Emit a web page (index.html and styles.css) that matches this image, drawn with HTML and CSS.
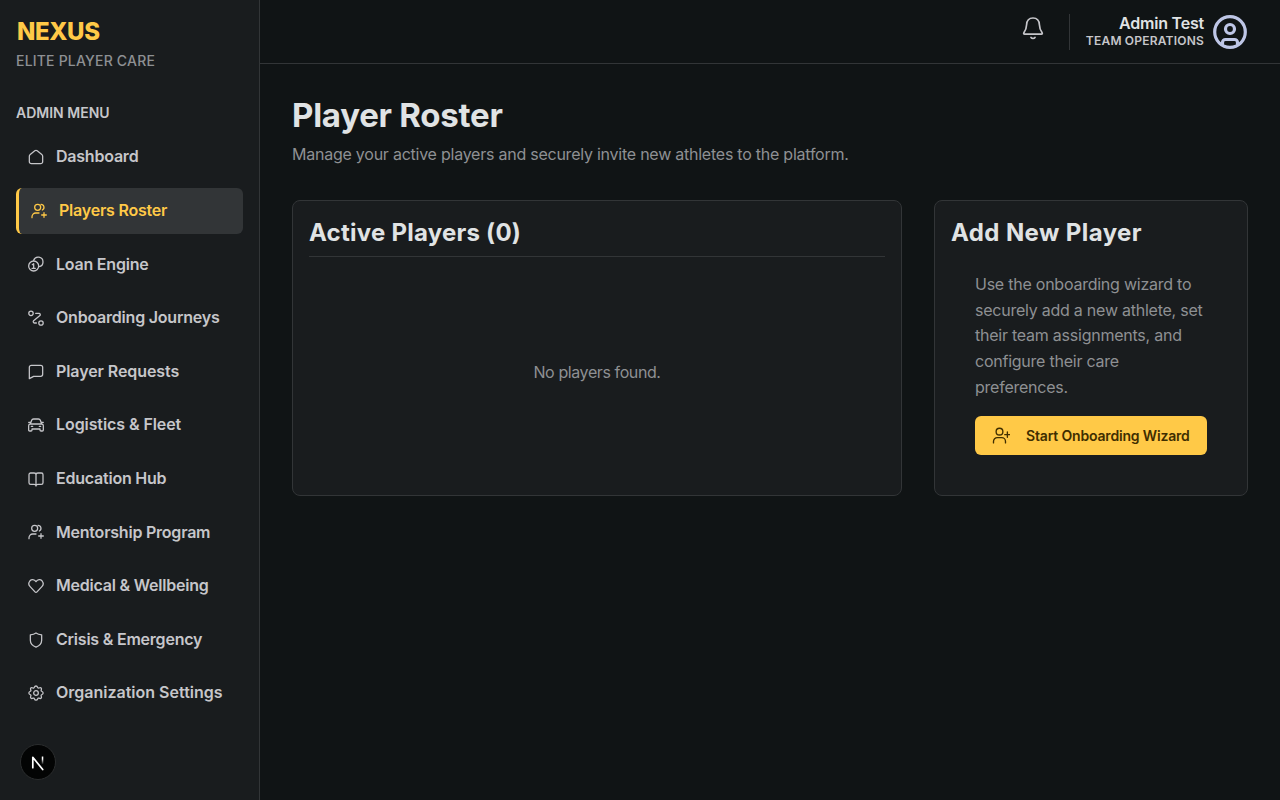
FILE: index.html
```html
<!DOCTYPE html>
<html lang="en">
<head>
    <meta charset="UTF-8">
    <meta name="viewport" content="width=device-width, initial-scale=1.0">
    <title>Nexus - Player Roster</title>
    <link rel="stylesheet" href="styles.css">
</head>
<body>
    <div class="layout">
        <!-- Sidebar -->
        <aside class="sidebar">
            <div class="brand">NEXUS</div>
            <div class="tagline">ELITE PLAYER CARE</div>
            <div class="menu-title">ADMIN MENU</div>
            <nav class="menu">
                <a class="menu-item" href="#">
                    <svg class="icon" viewBox="0 0 24 24"><path d="M2 10.700c0-1 .5-1.900 1.300-2.500l6.900-5.500c1.100-.8 2.500-.8 3.600 0l6.900 5.500c.8.6 1.300 1.500 1.300 2.500V19a3 3 0 0 1-3 3H5a3 3 0 0 1-3-3z"/></svg>
                    <span>Dashboard</span>
                </a>
                <a class="menu-item active" href="#">
                    <svg class="icon" viewBox="0 0 24 24"><circle cx="10" cy="6.500" r="4.500"/><path d="M15 2a4.500 4.500 0 0 1 2 8.500M1.500 22v-1.500a5.500 5.500 0 0 1 5.500-5.500h5M19.500 14.500v7M16 18h7"/></svg>
                    <span>Players Roster</span>
                </a>
                <a class="menu-item" href="#">
                    <svg class="icon" viewBox="0 0 24 24"><circle cx="8.500" cy="15" r="7.500"/><path d="M8.500 6.500a7.200 7.200 0 1 1 8 9.500M6.500 13l2-1.500v7M6 18.500h5"/></svg>
                    <span>Loan Engine</span>
                </a>
                <a class="menu-item" href="#">
                    <svg class="icon" viewBox="0 0 24 24"><circle cx="4.500" cy="5" r="3.300"/><circle cx="19.500" cy="19.500" r="3.300"/><path d="M11.500 5h5a2 2 0 0 1 1.400 3.400l-9.500 7.700a2 2 0 0 0 1.200 3.400h3"/></svg>
                    <span>Onboarding Journeys</span>
                </a>
                <a class="menu-item requests" href="#">
                    <svg class="icon" viewBox="0 0 24 24"><path d="M2 22V5a3 3 0 0 1 3-3h14a3 3 0 0 1 3 3v10.500a3 3 0 0 1-3 3H8.500z"/></svg>
                    <span>Player Requests</span>
                </a>
                <a class="menu-item logistics" href="#">
                    <svg class="icon" viewBox="0 0 24 24"><path d="M3.500 10.500l2-5.500a3 3 0 0 1 2.800-2h7.400a3 3 0 0 1 2.800 2l2 5.500M3.500 10.500h17a2.500 2.500 0 0 1 2.500 2.500v6.500a1.500 1.500 0 0 1-1.500 1.500h-2a1.500 1.500 0 0 1-1.500-1.500V18H6v1.500A1.500 1.500 0 0 1 4.500 21h-2A1.500 1.500 0 0 1 1 19.500V13a2.500 2.500 0 0 1 2.500-2.500zM1 8h2.500M20.500 8H23M5 14.200h2M17 14.200h2"/></svg>
                    <span>Logistics &amp; Fleet</span>
                </a>
                <a class="menu-item" href="#">
                    <svg class="icon" viewBox="0 0 24 24"><path d="M12 5.500C12 4 10.500 3 9 3H4a2.500 2.500 0 0 0-2.500 2.500v12A2.500 2.500 0 0 0 4 20h5c1.500 0 3 1 3 2.500 0-1.500 1.500-2.500 3-2.500h5a2.500 2.500 0 0 0 2.500-2.500v-12A2.500 2.500 0 0 0 20 3h-5c-1.500 0-3 1-3 2.500zM12 5.500v17"/></svg>
                    <span>Education Hub</span>
                </a>
                <a class="menu-item" href="#">
                    <svg class="icon" viewBox="0 0 24 24"><circle cx="10" cy="6.500" r="4.500"/><path d="M15 2a4.500 4.500 0 0 1 2 8.500M1.500 22v-1.500a5.500 5.500 0 0 1 5.500-5.500h5M19.500 14.500v7M16 18h7"/></svg>
                    <span>Mentorship Program</span>
                </a>
                <a class="menu-item" href="#">
                    <svg class="icon" viewBox="0 0 24 24"><path d="M12 5.500C9.500 1.500 5 2 3 4.200 .8 6.800.8 10.500 3.200 13l7.300 7.900a2 2 0 0 0 3 0l7.300-7.900c2.400-2.500 2.400-6.200.2-8.800-2-2.200-6.500-2.700-9 1.300z"/></svg>
                    <span>Medical &amp; Wellbeing</span>
                </a>
                <a class="menu-item" href="#">
                    <svg class="icon" viewBox="0 0 24 24"><path d="M12 1.500c2.500 1.800 5.500 2.500 8.500 2.700v8c0 5-3.500 8.300-8.500 10.600-5-2.300-8.500-5.600-8.500-10.600v-8c3-.2 6-.9 8.500-2.700z"/></svg>
                    <span>Crisis &amp; Emergency</span>
                </a>
                <a class="menu-item settings" href="#">
                    <svg class="icon" viewBox="0 0 24 24"><circle cx="12" cy="12" r="3.500"/><path d="M12 1.500c1.500 0 2 .8 2.600 2.200.4.900 1 1.100 1.900.8 1.400-.6 2.400-.8 3.200 0s.7 1.800.1 3.200c-.4.900-.1 1.400.7 1.700 1.500.6 2.200 1.200 2.200 2.600s-.8 2-2.200 2.600c-.9.400-1.100 1-.7 1.900.6 1.400.8 2.400 0 3.200s-1.800.7-3.200.1c-.9-.4-1.500-.1-1.900.8-.6 1.400-1.200 2.200-2.700 2.200s-2-.8-2.600-2.200c-.4-.9-1-1.200-1.900-.8-1.400.6-2.400.7-3.200-.1s-.7-1.800-.1-3.200c.4-.9.2-1.500-.7-1.900C2.100 14 1.300 13.400 1.300 12s.8-2 2.200-2.600c.9-.4 1.100-.9.7-1.700-.6-1.400-.8-2.400 0-3.200s1.800-.6 3.200 0c.9.4 1.500.1 1.900-.8C9.900 2.300 10.500 1.500 12 1.500z"/></svg>
                    <span>Organization Settings</span>
                </a>
            </nav>
        </aside>

        <div class="content">
            <!-- Top bar -->
            <header class="topbar">
                <svg class="bell" viewBox="0 0 24 24"><path d="M12 2c4 0 6.200 2.800 6.400 6.800.2 4.300 1.200 6 2.600 7.800.6.800.3 1.600-.6 1.600H3.600c-.9 0-1.200-.8-.6-1.600 1.400-1.800 2.400-3.500 2.600-7.800C5.800 4.800 8 2 12 2zM10 21.500c.9 1.200 3.100 1.200 4 0"/></svg>
                <div class="account">
                    <div class="account-text">
                        <div class="account-name">Admin Test</div>
                        <div class="account-role">TEAM OPERATIONS</div>
                    </div>
                    <svg class="avatar" viewBox="0 0 40 40"><circle cx="20" cy="20" r="15.300"/><circle cx="20" cy="17" r="4.500"/><path d="M12.500 32v-1.500a3 3 0 0 1 3-3h9a3 3 0 0 1 3 3V32"/></svg>
                </div>
            </header>

            <main class="page">
                <h1>Player Roster</h1>
                <p class="subtitle">Manage your active players and securely invite new athletes to the platform.</p>
                <div class="cards">
                    <section class="card">
                        <h2 class="active-title">Active Players (0)</h2>
                        <div class="empty">No players found.</div>
                    </section>
                    <section class="card">
                        <h2 class="add-title">Add New Player</h2>
                        <div class="add-body">
                            <p>Use the onboarding wizard to<br>securely add a new athlete, set<br>their team assignments, and<br>configure their care<br>preferences.</p>
                            <button class="btn">
                                <svg class="btn-icon" viewBox="0 0 24 24"><circle cx="10" cy="7.500" r="4.500"/><path d="M2 22.500v-2a5 5 0 0 1 5-5h6a5 5 0 0 1 5 5v2M20.500 8v7M17 11.500h7"/></svg>
                                <span>Start Onboarding Wizard</span>
                            </button>
                        </div>
                    </section>
                </div>
            </main>
        </div>
    </div>

    <!-- Dev tools badge -->
    <div class="dev-badge">
        <svg viewBox="0 0 36 36">
            <defs>
                <linearGradient id="fade" x1="0" y1="0" x2="0" y2="1"><stop offset="0.300" stop-color="#fff"/><stop offset="1" stop-color="#fff" stop-opacity="0"/></linearGradient>
            </defs>
            <path d="M12.500 24V13l10.500 13" fill="none" stroke="#fff" stroke-width="1.800"/>
            <rect x="22" y="12.200" width="1.600" height="8.500" fill="url(#fade)"/>
        </svg>
    </div>
</body>
</html>
```
FILE: styles.css
```css
* { box-sizing: border-box; }
body { margin: 0; background: #101415; color: #e0e3e4; font-family: Inter, "Open Sans", sans-serif; font-size: 16px; line-height: 1.6; }
h1, h2, p { margin: 0; }
svg { fill: none; stroke: currentColor; stroke-linecap: round; stroke-linejoin: round; flex-shrink: 0; }
.layout { display: flex; height: 100vh; }

/* Sidebar */
.sidebar { width: 260px; padding: 16px; background: #191c1e; border-right: 1px solid #323537; white-space: nowrap; }
.brand { padding-left: 1px; color: #ffc947; font-size: 24px; font-weight: 800; line-height: 31px; letter-spacing: -0.4px; }
.tagline { margin-top: 4px; color: #8e9093; font-size: 14px; font-weight: 500; line-height: 20px; letter-spacing: 0.2px; }
.menu-title { margin: 32px 0 11.400px; color: #c6c6ca; font-size: 14px; font-weight: 600; line-height: 20px; }
.menu { display: flex; flex-direction: column; gap: 8px; }
.menu-item { display: flex; align-items: center; gap: 12px; height: 45.600px; padding: 0 12px; border-radius: 6px; color: #c6c6ca; font-weight: 600; letter-spacing: -0.220px; text-decoration: none; }
.menu-item.active { border-left: 3px solid #ffc947; background: #323537; color: #ffc947; }
.menu-item.requests, .menu-item.logistics { letter-spacing: -0.080px; }
.menu-item.settings { letter-spacing: 0; }
.icon { width: 16px; height: 16px; stroke-width: 1.900; }

/* Top bar */
.content { flex: 1; }
.topbar { display: flex; justify-content: flex-end; align-items: center; gap: 24px; height: 64px; padding: 0 30px; border-bottom: 1px solid #323537; }
.bell { width: 24px; height: 24px; color: #c6c6ca; stroke-width: 1.700; margin-bottom: 8px; }
.account { display: flex; align-items: center; gap: 6px; height: 36px; padding-left: 16px; border-left: 1px solid #323537; text-align: right; }
.account-name { font-weight: 600; line-height: 18px; letter-spacing: -0.2px; }
.account-role { color: #c6c6ca; font-size: 12px; font-weight: 600; line-height: 17px; letter-spacing: 0.2px; }
.avatar { width: 40px; height: 40px; color: #bec6e6; stroke-width: 3.200; }

/* Page */
.page { padding: 31px 32px; }
h1 { font-size: 33px; font-weight: 700; line-height: 40px; letter-spacing: -0.250px; }
.subtitle { margin-top: 7px; color: #8e9093; letter-spacing: -0.240px; }
.cards { display: grid; grid-template-columns: 1fr 314px; gap: 32px; margin-top: 32.400px; }
.card { height: 296px; padding: 16px; border: 1px solid #323537; border-radius: 8px; background: #191c1e; }
h2 { font-size: 24px; font-weight: 700; line-height: 31px; }
.active-title { height: 40px; border-bottom: 1px solid #323537; letter-spacing: 0.240px; }
.add-title { letter-spacing: 0.4px; }
.empty { display: flex; justify-content: center; align-items: center; height: 232px; color: #8e9093; letter-spacing: -0.4px; }
.add-body { padding: 24.300px 24px; color: #8e9093; white-space: nowrap; }
.add-body p { letter-spacing: -0.240px; }
.btn { display: flex; align-items: center; gap: 16px; width: 232px; height: 39px; margin-top: 15.700px; padding: 0 17px; border: none; border-radius: 6px; background: #ffc947; color: #3f2e00; font: 600 14px Inter, "Open Sans", sans-serif; letter-spacing: -0.170px; white-space: nowrap; cursor: pointer; }
.btn-icon { width: 18px; height: 18px; stroke-width: 1.800; }

.dev-badge { position: absolute; left: 20px; bottom: 20px; width: 36px; height: 36px; border: 1px solid #2b2d2e; border-radius: 50%; background: #030404; }
.dev-badge svg { display: block; width: 34px; height: 34px; stroke: none; }
```
